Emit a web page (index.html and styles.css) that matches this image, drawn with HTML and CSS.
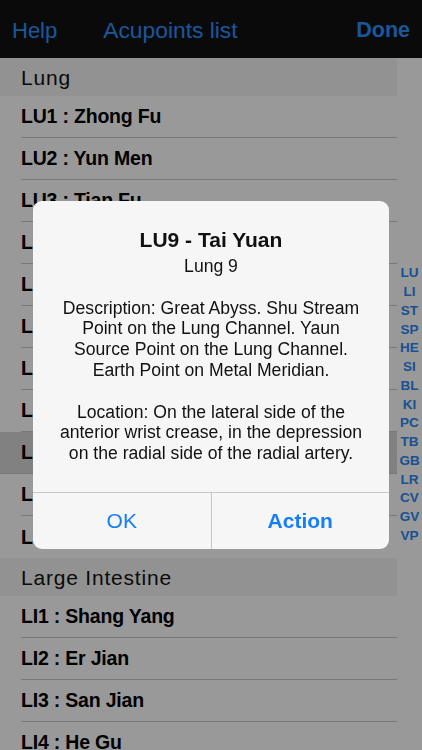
FILE: index.html
```html
<!DOCTYPE html>
<html lang="en">
<head>
<meta charset="utf-8">
<title>Acupoints list</title>
<link rel="stylesheet" href="styles.css">
</head>
<body>
<div class="app">
  <header class="navbar">
    <span class="nav-btn">Help</span>
    <span class="nav-title">Acupoints list</span>
    <span class="nav-btn nav-done">Done</span>
  </header>
  <div class="content">
    <div class="list">
      <div class="section-header">Lung</div>
      <div class="row">LU1 : Zhong Fu</div>
      <div class="row">LU2 : Yun Men</div>
      <div class="row">LU3 : Tian Fu</div>
      <div class="row">LU4 : Xia Bai</div>
      <div class="row">LU5 : Chi Ze</div>
      <div class="row">LU6 : Kong Zui</div>
      <div class="row">LU7 : Lie Que</div>
      <div class="row">LU8 : Jing Qu</div>
      <div class="row row-selected">LU9 : Tai Yuan</div>
      <div class="row">LU10 : Yu Ji</div>
      <div class="row row-last">LU11 : Shao Shang</div>
      <div class="section-header">Large Intestine</div>
      <div class="row">LI1 : Shang Yang</div>
      <div class="row">LI2 : Er Jian</div>
      <div class="row">LI3 : San Jian</div>
      <div class="row">LI4 : He Gu</div>
    </div>
    <nav class="index">
      <span>LU</span><span>LI</span><span>ST</span><span>SP</span><span>HE</span>
      <span>SI</span><span>BL</span><span>KI</span><span>PC</span><span>TB</span>
      <span>GB</span><span>LR</span><span>CV</span><span>GV</span><span>VP</span>
    </nav>
  </div>
</div>

<div class="overlay">
  <div class="alert">
    <div class="alert-body">
      <div class="alert-title">LU9 - Tai Yuan</div>
      <div class="alert-message">Lung 9<br><br>Description: Great Abyss. Shu Stream<br>Point on the Lung Channel. Yaun<br>Source Point on the Lung Channel.<br>Earth Point on Metal Meridian.<br><br>Location: On the lateral side of the<br>anterior wrist crease, in the depression<br>on the radial side of the radial artery.</div>
    </div>
    <div class="alert-buttons">
      <div class="alert-btn">OK</div>
      <div class="alert-btn alert-btn-bold">Action</div>
    </div>
  </div>
</div>
</body>
</html>
```

FILE: styles.css
```css
* {
  box-sizing: border-box;
}

html, body {
  margin: 0;
  padding: 0;
  height: 100%;
  overflow: hidden;
}

body {
  font-family: "Liberation Sans", Arial, sans-serif;
  background: #ffffff;
  color: #000000;
}

.app {
  display: flex;
  flex-direction: column;
  height: 750px;
  overflow: hidden;
}

.navbar {
  flex: 0 0 58px;
  display: flex;
  align-items: center;
  padding: 3px 12px 0 12px;
  background: #121212;
  font-size: 22px;
  color: #2e90ff;
  gap: 46px;
}

.nav-title {
  font-size: 22.8px;
}

.nav-done {
  margin-left: auto;
  font-weight: bold;
  font-size: 21.5px;
}

.content {
  flex: 1;
  display: flex;
  min-height: 0;
  background: #ffffff;
}

.list {
  flex: 0 0 397px;
  overflow: hidden;
}

.section-header {
  height: 38px;
  padding: 2px 0 0 21px;
  display: flex;
  align-items: center;
  background: #f4f4f4;
  font-size: 21px;
  letter-spacing: 0.8px;
  color: #111;
}

.row {
  height: 42px;
  margin-left: 21px;
  display: flex;
  align-items: center;
  border-bottom: 1px solid #c9c8cd;
  font-size: 19.5px;
  font-weight: bold;
  letter-spacing: -0.2px;
  white-space: nowrap;
}

.row-selected {
  margin-left: 0;
  padding-left: 21px;
  background: #d8d8d8;
}

.row-last {
  border-bottom: none;
}

.index {
  flex: 1;
  display: flex;
  flex-direction: column;
  justify-content: center;
  align-items: center;
  padding-top: 2px;
  font-size: 13.5px;
  font-weight: bold;
  line-height: 18.74px;
  color: #2a88f5;
}

.overlay {
  position: fixed;
  inset: 0;
  background: rgba(0, 0, 0, 0.4);
  display: flex;
  align-items: center;
  justify-content: center;
}

.alert {
  width: 356px;
  border-radius: 9px;
  background: #f6f6f6;
  overflow: hidden;
  text-align: center;
  color: #111;
}

.alert-body {
  padding: 26px 10px 28px 10px;
}

.alert-title {
  font-size: 21px;
  font-weight: bold;
  line-height: 26px;
  margin-bottom: 3px;
}

.alert-message {
  font-size: 17.6px;
  line-height: 20.8px;
  white-space: nowrap;
}

.alert-buttons {
  display: flex;
  height: 57px;
  border-top: 1px solid #c8c7cc;
}

.alert-btn {
  flex: 1;
  display: flex;
  align-items: center;
  justify-content: center;
  font-size: 21px;
  color: #147efb;
}

.alert-btn + .alert-btn {
  border-left: 1px solid #c8c7cc;
}

.alert-btn-bold {
  font-weight: bold;
}
```
